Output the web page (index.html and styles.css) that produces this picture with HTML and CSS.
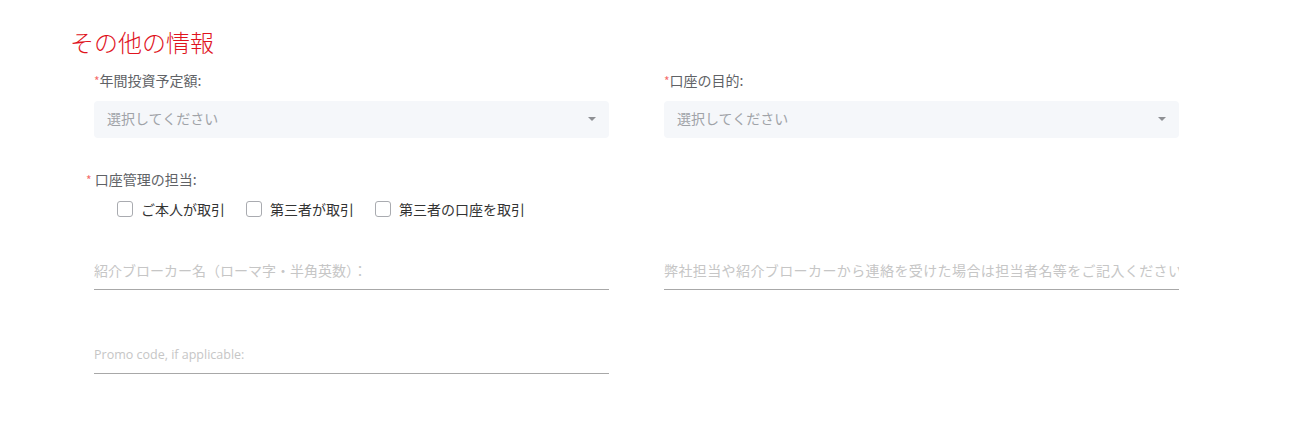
FILE: index.html
```html
<!DOCTYPE html>
<html lang="ja">
<head>
<meta charset="utf-8">
<title>その他の情報</title>
<link rel="stylesheet" href="styles.css">
</head>
<body>
<div class="page">
  <h2 class="title">その他の情報</h2>
  <div class="form">
    <div class="field">
      <div class="label"><span class="req">*</span>年間投資予定額:</div>
      <div class="select"><span class="ph">選択してください</span><span class="arrow"></span></div>
    </div>
    <div class="field">
      <div class="label"><span class="req">*</span>口座の目的:</div>
      <div class="select"><span class="ph">選択してください</span><span class="arrow"></span></div>
    </div>

    <div class="field wide row2">
      <div class="label shifted"><span class="req">*</span> 口座管理の担当:</div>
      <div class="checks">
        <label class="check"><span class="box"></span><span class="ctext">ご本人が取引</span></label>
        <label class="check"><span class="box"></span><span class="ctext">第三者が取引</span></label>
        <label class="check"><span class="box"></span><span class="ctext">第三者の口座を取引</span></label>
      </div>
    </div>

    <div class="field row3">
      <div class="line-input"><span class="lph">紹介ブローカー名（ローマ字・半角英数）：</span></div>
    </div>
    <div class="field row3">
      <div class="line-input"><span class="lph long">弊社担当や紹介ブローカーから連絡を受けた場合は担当者名等をご記入ください</span></div>
    </div>

    <div class="field row4">
      <div class="line-input"><span class="lph latin">Promo code, if applicable:</span></div>
    </div>
  </div>
</div>
</body>
</html>
```

FILE: styles.css
```css
html, body {
  margin: 0;
  padding: 0;
  background: #ffffff;
}

body {
  font-family: "Noto Sans CJK JP", "Noto Sans", sans-serif;
  color: #333333;
}

.page {
  padding: 26px 0 0 70px;
}

.title {
  margin: 0;
  font-size: 24px;
  line-height: 32px;
  font-weight: 300;
  color: #e0141e;
}

.form {
  margin-left: 24px;
  width: 1085px;
  display: grid;
  grid-template-columns: 515px 515px;
  column-gap: 55px;
  margin-top: 12px;
}

.field.wide {
  grid-column: 1 / span 2;
}

.label {
  font-size: 14px;
  line-height: 20px;
  color: #606266;
  height: 20px;
}

.label.shifted {
  margin-left: -8px;
}

.req {
  color: #f56c6c;
  font-size: 12px;
}

.select {
  margin-top: 11px;
  height: 37px;
  background: #f5f7fa;
  border-radius: 4px;
  display: flex;
  align-items: center;
  justify-content: space-between;
  padding: 0 13px 4px 13px;
  box-sizing: border-box;
}

.ph {
  font-size: 14px;
  color: #a0a3a8;
}

.arrow {
  width: 0;
  height: 0;
  border-left: 4px solid transparent;
  border-right: 4px solid transparent;
  border-top: 4px solid #8e9094;
  margin-top: 3px;
}

.row2 {
  margin-top: 31px;
}

.checks {
  margin-top: 10px;
  padding-left: 23px;
  display: flex;
  align-items: center;
  height: 20px;
}

.check {
  display: flex;
  align-items: center;
  margin-right: 21px;
}

.box {
  width: 14px;
  height: 14px;
  border: 1px solid #a9abb0;
  border-radius: 3px;
  background: #ffffff;
  margin-right: 8px;
}

.ctext {
  font-size: 14px;
  line-height: 20px;
  color: #333333;
}

.row3 {
  margin-top: 34px;
}

.row4 {
  margin-top: 47px;
}

.line-input {
  height: 37px;
  border-bottom: 1px solid #a8a8a8;
  box-sizing: border-box;
  display: flex;
  align-items: center;
  padding-bottom: 2px;
  overflow: hidden;
  white-space: nowrap;
}

.lph {
  font-size: 14px;
  color: #c6c6c6;
}

.lph.long {
  letter-spacing: 0.4px;
}

.lph.latin {
  font-family: "Open Sans", "Noto Sans", sans-serif;
  font-size: 12.5px;
}
```
